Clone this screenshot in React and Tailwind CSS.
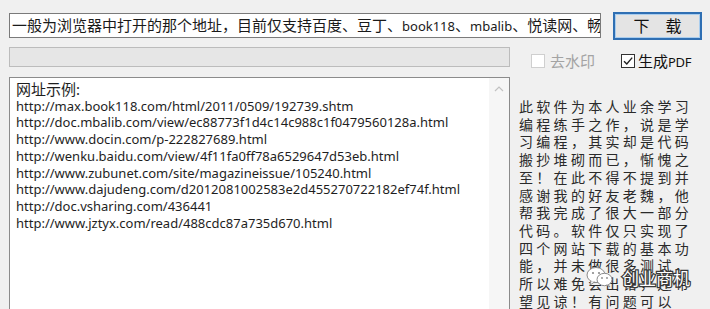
import React from "react";

const urls = [
  "http://max.book118.com/html/2011/0509/192739.shtm",
  "http://doc.mbalib.com/view/ec88773f1d4c14c988c1f0479560128a.html",
  "http://www.docin.com/p-222827689.html",
  "http://wenku.baidu.com/view/4f11fa0ff78a6529647d53eb.html",
  "http://www.zubunet.com/site/magazineissue/105240.html",
  "http://www.dajudeng.com/d2012081002583e2d455270722182ef74f.html",
  "http://doc.vsharing.com/436441",
  "http://www.jztyx.com/read/488cdc87a735d670.html",
];

const notes = [
  "此软件为本人业余学习",
  "编程练手之作，说是学",
  "习编程，其实却是代码",
  "搬抄堆砌而已，惭愧之",
  "至！在此不得不提到并",
  "感谢我的好友老魏，他",
  "帮我完成了很大一部分",
  "代码。软件仅只实现了",
  "四个网站下载的基本功",
  "能，并未做很多测试，",
  "所以难免会出错，还希",
  "望见谅！有问题可以",
  "联系作者，谢谢支持！",
];

const FONT = "font-['Noto_Sans','Noto_Sans_CJK_SC',sans-serif]";

export default function App() {
  return (
    <div
      className={`relative w-[710px] h-[309px] overflow-hidden bg-[#f0f0f0] pt-[12px] pl-[9px] flex flex-col ${FONT}`}
    >
      {/* Row 1: URL input + download button */}
      <div className="flex items-start">
        <div className="mt-px w-[592px] h-[25px] border border-[#7a7a7a] bg-white overflow-hidden whitespace-nowrap pl-[2px] text-[15px] leading-[23px] text-[#1a1a1a]">
          一般为浏览器中打开的那个地址，目前仅支持百度、豆丁、<span className="text-[13px]">book118</span>、<span className="text-[13px]">mbalib</span>、悦读网、畅读网
        </div>
        <div className="ml-[12px] w-[89px] h-[28px] border-2 border-[#2f6fb3] bg-[#e4e4e4] flex items-center justify-center">
          <div className="w-full h-full border border-[#a9cdee] flex items-center justify-center text-[16px] text-[#111] leading-none">
            下　载
          </div>
        </div>
      </div>

      {/* Row 2: progress + checkboxes */}
      <div className="mt-[7px] flex items-start">
        <div className="w-[501px] h-[20px] border border-[#bcbcbc] bg-[#e6e6e6]" />
        <div className="ml-[21px] mt-[7px] flex items-center h-[14px]">
          <div className="w-[14px] h-[14px] border border-[#cfcfcf] bg-white" />
          <span className="ml-[5px] text-[15px] leading-none text-[#a3a3a3]">去水印</span>
          <div className="ml-[26px] w-[14px] h-[14px] border border-[#333] bg-white flex items-center justify-center">
            <svg width="12" height="12" viewBox="0 0 12 12">
              <path d="M2 6.2 L4.8 9 L10.2 2.6" fill="none" stroke="#222" strokeWidth="1.4" />
            </svg>
          </div>
          <span className="ml-[3px] text-[15px] leading-none text-[#111]">
            生成<span className="text-[13px] tracking-[-0.3px]">PDF</span>
          </span>
        </div>
      </div>

      {/* Row 3: text area + notes */}
      <div className="mt-[9px] flex flex-1">
        <div className="w-[501px] h-[260px] border border-[#8b8b8b] bg-white flex">
          <div className="flex-1 pl-[6px] pt-[3px] text-[13px] leading-[16.7px] text-[#1e1e1e] whitespace-nowrap">
            <div className="text-[15px]">网址示例:</div>
            {urls.map((u) => (
              <div key={u}>{u}</div>
            ))}
          </div>
          <div className="w-[20px] bg-[#f6f6f6] flex justify-center pt-[8px]">
            <svg width="10" height="6" viewBox="0 0 10 6">
              <path d="M1 5 L5 1 L9 5" fill="none" stroke="#c2c2c2" strokeWidth="1.2" />
            </svg>
          </div>
        </div>
        <div className="ml-[9px] pt-[21px] text-[14px] leading-[17.7px] tracking-[3.3px] text-[#2a2a2a] whitespace-nowrap">
          {notes.map((n, i) => (
            <div key={i}>{n}</div>
          ))}
        </div>
      </div>

      {/* Watermark overlay */}
      <div className="absolute left-[586px] top-[266px] flex items-center">
        <svg width="28" height="22" viewBox="0 0 28 22">
          <ellipse cx="10" cy="9" rx="9" ry="7.5" fill="#fff" stroke="#8a8a8a" strokeWidth="1" />
          <path d="M5 15 L4 19 L8.5 16" fill="#fff" stroke="#8a8a8a" strokeWidth="1" />
          <circle cx="7" cy="7" r="1.1" fill="#8a8a8a" />
          <circle cx="13" cy="7" r="1.1" fill="#8a8a8a" />
          <ellipse cx="18.5" cy="13.5" rx="7.5" ry="6.2" fill="#fff" stroke="#8a8a8a" strokeWidth="1" />
          <path d="M22 18.5 L24 21 L20.5 19" fill="#fff" stroke="#8a8a8a" strokeWidth="1" />
          <circle cx="16" cy="12" r="0.9" fill="#8a8a8a" />
          <circle cx="21" cy="12" r="0.9" fill="#8a8a8a" />
        </svg>
        <span className="ml-[8px] text-[17px] leading-none text-white font-['Noto_Sans_CJK_SC',sans-serif] [-webkit-text-stroke:2.5px_#3a3a3a] [paint-order:stroke_fill]">
          创业商机
        </span>
      </div>
    </div>
  );
}
